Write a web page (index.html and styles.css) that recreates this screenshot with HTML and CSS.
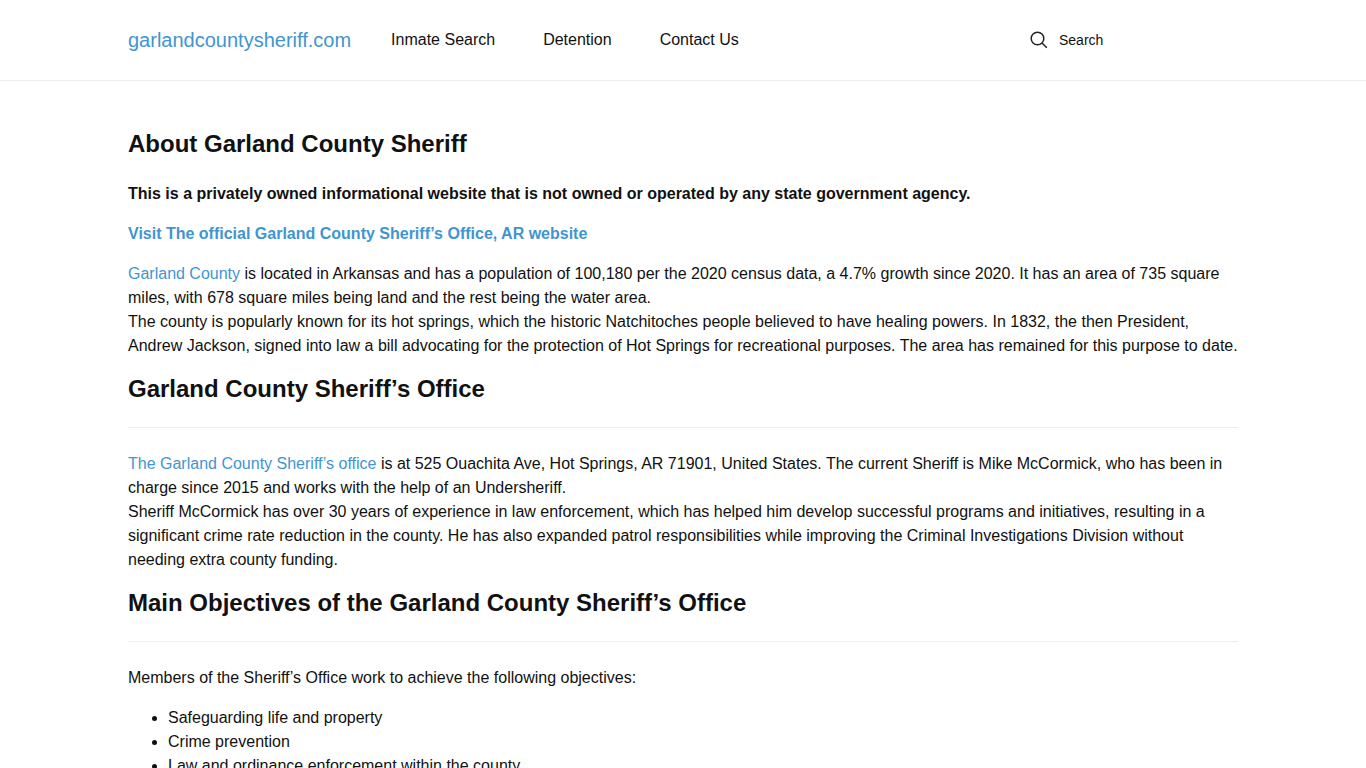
FILE: index.html
```html
<!DOCTYPE html>
<html lang="en">
<head>
    <meta charset="UTF-8">
    <meta name="viewport" content="width=device-width, initial-scale=1.0">
    <title>About Garland County Sheriff</title>
    <link rel="stylesheet" href="styles.css">
</head>
<body>
    <header class="site-header">
        <div class="container header-inner">
            <a class="site-title" href="#">garlandcountysheriff.com</a>
            <nav class="site-nav">
                <a href="#">Inmate Search</a>
                <a href="#">Detention</a>
                <a href="#">Contact Us</a>
            </nav>
            <form class="search-form" role="search">
                <button type="submit" class="search-button" aria-label="Submit search">
                    <svg width="18" height="18" viewBox="0 0 18 18" fill="none" stroke="#222" stroke-width="1.5">
                        <circle cx="7.5" cy="7.5" r="6.3"/>
                        <path d="M12 12l4.8 4.8"/>
                    </svg>
                </button>
                <input type="search" class="search-input" placeholder="Search" aria-label="Search">
            </form>
        </div>
    </header>

    <main class="container content">
        <h1>About Garland County Sheriff</h1>
        <p><strong>This is a privately owned informational website that is not owned or operated by any state government agency.</strong></p>
        <p><a href="#"><strong>Visit The official Garland County Sheriff’s Office, AR website</strong></a></p>
        <p><a href="#">Garland County</a> is located in Arkansas and has a population of 100,180 per the 2020 census data, a 4.7% growth since 2020. It has an area of 735 square miles, with 678 square miles being land and the rest being the water area.<br>
        The county is popularly known for its hot springs, which the historic Natchitoches people believed to have healing powers. In 1832, the then President, Andrew Jackson, signed into law a bill advocating for the protection of Hot Springs for recreational purposes. The area has remained for this purpose to date.</p>

        <h2>Garland County Sheriff’s Office</h2>
        <p><a href="#">The Garland County Sheriff’s office</a> is at 525 Ouachita Ave, Hot Springs, AR 71901, United States. The current Sheriff is Mike McCormick, who has been in charge since 2015 and works with the help of an Undersheriff.<br>
        Sheriff McCormick has over 30 years of experience in law enforcement, which has helped him develop successful programs and initiatives, resulting in a significant crime rate reduction in the county. He has also expanded patrol responsibilities while improving the Criminal Investigations Division without needing extra county funding.</p>

        <h2>Main Objectives of the Garland County Sheriff’s Office</h2>
        <p>Members of the Sheriff’s Office work to achieve the following objectives:</p>
        <ul>
            <li>Safeguarding life and property</li>
            <li>Crime prevention</li>
            <li>Law and ordinance enforcement within the county</li>
        </ul>
    </main>
</body>
</html>
```
FILE: styles.css
```css
/* Basic page styling */
* {
    box-sizing: border-box;
}

html {
    scrollbar-width: none;
}

body {
    margin: 0;
    font-family: "Liberation Sans", Arial, sans-serif;
    font-size: 16px;
    line-height: 24px;
    color: #111;
    background-color: #fff;
}

a {
    color: #3f95d3;
    text-decoration: none;
}

.container {
    max-width: 1366px;
    margin: 0 auto;
    padding: 0 128px;
}

/* Header */
.site-header {
    border-bottom: 1px solid #eee;
}

.header-inner {
    display: flex;
    align-items: center;
    min-height: 80px;
}

.site-title {
    font-size: 20px;
}

.site-nav {
    display: flex;
    gap: 48px;
    margin-left: 40px;
}

.site-nav a {
    color: #111;
}

/* Search box */
.search-form {
    display: flex;
    align-items: center;
    gap: 11px;
    margin-left: auto;
}

.search-button {
    display: flex;
    padding: 0;
    border: 0;
    background: none;
    cursor: pointer;
}

.search-input {
    width: 179px;
    padding: 0;
    border: 0;
    outline: 0;
    background: none;
    font-family: inherit;
    font-size: 14px;
    color: #111;
}

.search-input::placeholder {
    color: #111;
    opacity: 1;
}

/* Page content */
.content {
    padding-top: 48px;
}

h1,
h2 {
    margin: 0 0 24px;
    font-size: 24px;
    line-height: 29px;
}

/* Section headings have a rule under them */
h2 {
    padding-bottom: 24px;
    border-bottom: 1px solid #eee;
}

p {
    margin: 0 0 16px;
}

ul {
    margin: 0;
    padding-left: 40px;
}
```
